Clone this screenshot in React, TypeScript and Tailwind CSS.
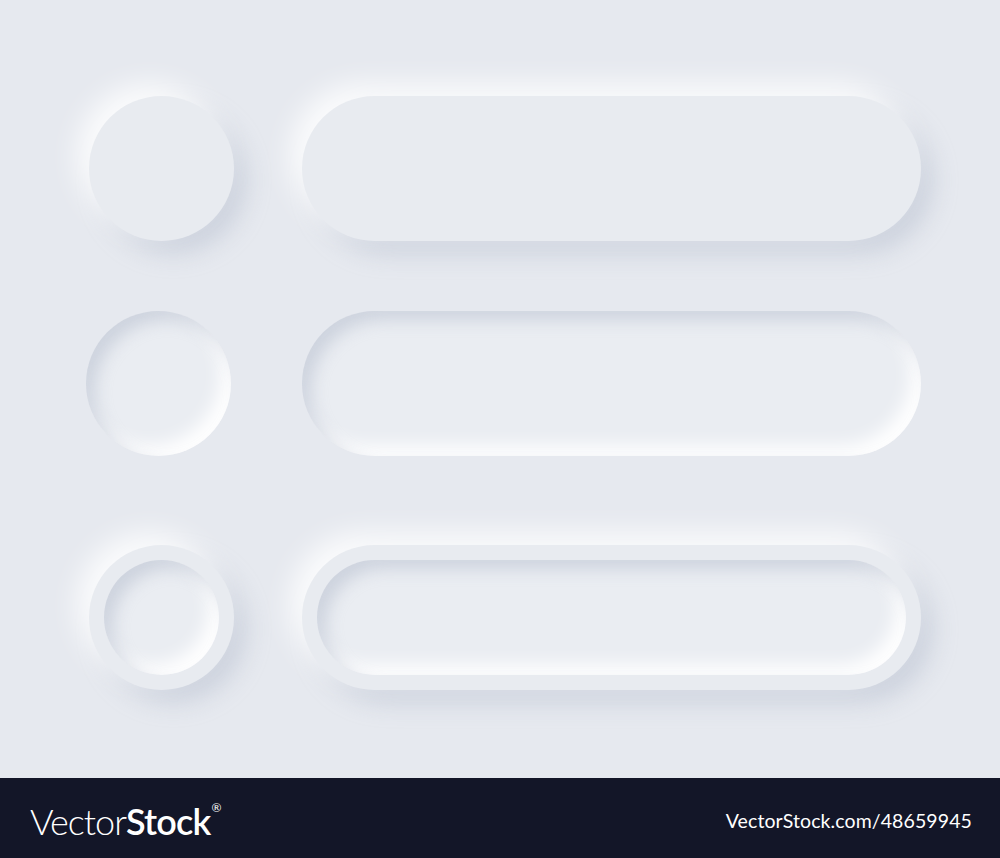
import React from 'react';

const raised =
  'shadow-[-12px_-12px_28px_rgba(255,255,255,0.85),12px_12px_24px_rgba(166,176,196,0.4)]';
const pressed =
  'shadow-[inset_9px_9px_16px_rgba(166,176,196,0.42),inset_-10px_-10px_18px_rgba(255,255,255,1)]';

const App: React.FC = () => {
  return (
    <div className="w-[1000px] h-[858px] flex flex-col bg-[#e6e9ef]" style={{ fontFamily: 'Lato, "Noto Sans", sans-serif' }}>
      <main className="h-[778px] flex flex-col">
        {/* Raised */}
        <div className="flex items-center mt-[96px] pl-[89px]">
          <div className={`w-[145px] h-[145px] rounded-full bg-[#e8ebf0] ${raised}`} />
          <div className={`ml-[68px] w-[619px] h-[145px] rounded-full bg-[#e8ebf0] ${raised}`} />
        </div>

        {/* Pressed */}
        <div className="flex items-center mt-[70px] pl-[86px]">
          <div className={`w-[145px] h-[145px] rounded-full bg-[#eaedf2] ${pressed}`} />
          <div className={`ml-[71px] w-[619px] h-[145px] rounded-full bg-[#eaedf2] ${pressed}`} />
        </div>

        {/* Raised with pressed inner */}
        <div className="flex items-center mt-[89px] pl-[89px]">
          <div className={`w-[145px] h-[145px] rounded-full bg-[#e8ebf0] p-[15px] ${raised}`}>
            <div className={`w-full h-full rounded-full bg-[#eaedf2] ${pressed}`} />
          </div>
          <div className={`ml-[68px] w-[619px] h-[145px] rounded-full bg-[#e8ebf0] p-[15px] ${raised}`}>
            <div className={`w-full h-full rounded-full bg-[#eaedf2] ${pressed}`} />
          </div>
        </div>
      </main>

      <footer className="h-[80px] bg-[#131628] flex items-center justify-between pl-[30px] pr-[28px] text-white">
        <div className="flex items-start leading-none mt-[6px]">
          <span className="text-[36px] font-light tracking-[-1px]">Vector</span>
          <span className="text-[36px] font-semibold tracking-[-0.8px]">Stock</span>
          <span className="text-[12px] ml-[1px] -mt-[1px]">®</span>
        </div>
        <div className="text-[19.5px] font-normal tracking-[0.1px] mt-[6px]">VectorStock.com/48659945</div>
      </footer>
    </div>
  );
};

export default App;
